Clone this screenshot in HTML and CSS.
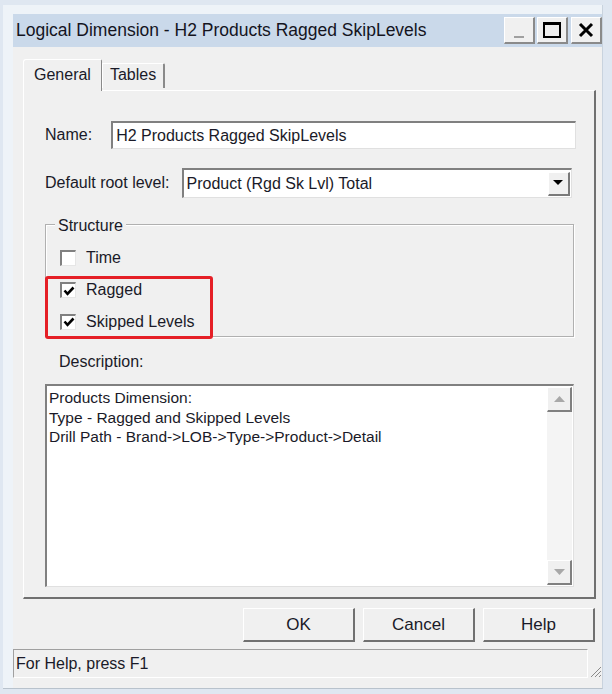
FILE: index.html
```html
<!DOCTYPE html>
<html>
<head>
<meta charset="utf-8">
<link rel="stylesheet" href="styles.css">
</head>
<body>
<div class="win">
  <div class="titlebar">
    <span class="title">Logical Dimension - H2 Products Ragged SkipLevels</span>
    <div class="tbtns">
      <div class="tbtn tmin"><span class="minbar"></span></div>
      <div class="tbtn tmax"><span class="maxbox"></span></div>
      <div class="tbtn tclose">
        <svg width="16" height="16" viewBox="0 0 16 16"><path d="M2 2 L14 14 M14 2 L2 14" stroke="#000" stroke-width="3" fill="none"/></svg>
      </div>
    </div>
  </div>
  <div class="client">
    <div class="tabs">
      <div class="tab active">General</div>
      <div class="tab">Tables</div>
    </div>
    <div class="panel">
      <div class="row name-row">
        <span class="lbl">Name:</span>
        <div class="input name-input">H2 Products Ragged SkipLevels</div>
      </div>
      <div class="row root-row">
        <span class="lbl">Default root level:</span>
        <div class="input select">
          <span class="sel-text">Product (Rgd Sk Lvl) Total</span>
          <div class="drop"><svg width="10" height="6" viewBox="0 0 10 6"><path d="M0 0 H10 L5 5 Z" fill="#000"/></svg></div>
        </div>
      </div>
      <div class="group">
        <span class="legend">Structure</span>
        <div class="chk-row r1"><span class="box"></span><span>Time</span></div>
        <div class="chk-row r2"><span class="box"><svg width="12" height="12" viewBox="0 0 12 12"><path d="M1.5 5.5 L4.5 8.8 L10.5 2.5" stroke="#000" stroke-width="2.6" fill="none"/></svg></span><span>Ragged</span></div>
        <div class="chk-row r3"><span class="box"><svg width="12" height="12" viewBox="0 0 12 12"><path d="M1.5 5.5 L4.5 8.8 L10.5 2.5" stroke="#000" stroke-width="2.6" fill="none"/></svg></span><span>Skipped Levels</span></div>
        <div class="highlight"></div>
      </div>
      <div class="desc-lbl">Description:</div>
      <div class="textarea">
        <div class="ta-text">Products Dimension:<br>Type - Ragged and Skipped Levels<br>Drill Path - Brand-&gt;LOB-&gt;Type-&gt;Product-&gt;Detail</div>
        <div class="vscroll">
          <div class="sbtn"><svg width="11" height="6" viewBox="0 0 11 6"><path d="M0 6 H11 L5.5 0 Z" fill="#a8a8a8"/></svg></div>
          <div class="track"></div>
          <div class="sbtn"><svg width="11" height="6" viewBox="0 0 11 6"><path d="M0 0 H11 L5.5 6 Z" fill="#a8a8a8"/></svg></div>
        </div>
      </div>
    </div>
    <div class="buttons">
      <div class="btn">OK</div>
      <div class="btn">Cancel</div>
      <div class="btn">Help</div>
    </div>
    <div class="statusrow">
      <div class="status">For Help, press F1</div>
      <div class="grip"><svg width="12" height="14" viewBox="0 0 12 14"><path d="M11 3 L1 13 M11 7 L5 13 M11 11 L9 13" stroke="#8a8a8a" stroke-width="1" fill="none"/></svg></div>
    </div>
  </div>
</div>
</body>
</html>
```
FILE: styles.css
```css
html, body {
  margin: 0;
  padding: 0;
}
body {
  background: #dfe7f1;
  font-family: "Liberation Sans", Arial, sans-serif;
  color: #1a1a28;
  width: 612px;
  height: 694px;
  overflow: hidden;
}
.win {
  margin: 5px 0 0 3px;
  width: 600px;
  height: 684px;
  box-sizing: border-box;
  background: #eef3f8;
  padding: 9px 0 0 10px;
  border-right: 1px solid #c9d3de;
  border-bottom: 1px solid #b8c2cc;
  display: flex;
  flex-direction: column;
}
.titlebar {
  height: 33px;
  background: #cad9ea;
  display: flex;
  align-items: center;
  justify-content: space-between;
  padding-left: 3px;
  flex: none;
}
.title {
  font-size: 17.5px;
  color: #14141e;
}
.tbtns {
  display: flex;
  gap: 2px;
  align-self: flex-start;
  margin-top: 3px;
}
.tbtn {
  width: 28px;
  height: 24px;
  background: #f0f0f0;
  border-top: 1px solid #fff;
  border-left: 1px solid #fff;
  border-right: 2px solid #8a8a8a;
  border-bottom: 2px solid #8a8a8a;
  display: flex;
  align-items: center;
  justify-content: center;
}
.tclose { margin-left: 1px; }
.minbar {
  width: 10px;
  height: 2px;
  background: #a0a0a0;
  margin-top: 14px;
}
.maxbox {
  width: 14px;
  height: 11px;
  border: 2px solid #000;
  border-top-width: 3px;
  box-sizing: content-box;
}
.client {
  flex: 1;
  background: #f0f0f0;
  display: flex;
  flex-direction: column;
  padding: 13px 0 0 10px;
}
.tabs {
  display: flex;
  align-items: flex-end;
  height: 30px;
  position: relative;
  z-index: 1;
}
.tab {
  font-size: 16px;
  height: 24px;
  line-height: 22px;
  padding: 0 7px;
  border-top: 1px solid #fff;
  border-left: 1px solid #fff;
  border-right: 2px solid #8a8a8a;
  border-top-right-radius: 2px;
  background: #f0f0f0;
  margin-bottom: 2px;
}
.tab.active {
  height: 31px;
  line-height: 30px;
  padding: 0 10px;
  margin-bottom: -1px;
  border-right: 1px solid #8a8a8a;
  border-top-left-radius: 3px;
}
.panel {
  width: 573px;
  height: 509px;
  box-sizing: border-box;
  border-top: 1px solid #fff;
  border-left: 1px solid #fff;
  border-right: 2px solid #707070;
  border-bottom: 2px solid #707070;
  padding: 30px 0 0 21px;
  font-size: 16px;
}
.row {
  display: flex;
  align-items: center;
}
.lbl { color: #1a1a28; }
.input {
  background: #fff;
  border-top: 2px solid #808080;
  border-left: 2px solid #808080;
  border-right: 1px solid #e0e0e0;
  border-bottom: 1px solid #e0e0e0;
  box-sizing: border-box;
}
.name-input {
  margin-left: 19px;
  width: 465px;
  height: 28px;
  line-height: 25px;
  padding-left: 3px;
}
.root-row { margin-top: 19px; }
.select {
  margin-left: 12px;
  width: 390px;
  height: 30px;
  display: flex;
  align-items: center;
  justify-content: space-between;
  padding: 0 1px 0 3px;
}
.drop {
  width: 22px;
  height: 24px;
  box-sizing: border-box;
  background: #f0f0f0;
  border-top: 1px solid #fff;
  border-left: 1px solid #fff;
  border-right: 2px solid #7a7a7a;
  border-bottom: 2px solid #7a7a7a;
  display: flex;
  align-items: center;
  justify-content: center;
}
.group {
  position: relative;
  margin-top: 26px;
  width: 529px;
  height: 113px;
  box-sizing: border-box;
  border: 1px solid #b0b0b0;
  box-shadow: 1px 1px 0 #fff, inset 1px 1px 0 #fff;
  padding: 16px 0 0 14px;
}
.legend {
  position: absolute;
  top: -11px;
  left: 9px;
  background: #f0f0f0;
  padding: 0 3px;
  line-height: 24px;
}
.chk-row {
  display: flex;
  align-items: center;
  height: 32px;
  gap: 10px;
}
.chk-row.r1 { height: 33px; }
.chk-row.r3 { height: 31px; }
.box {
  width: 16px;
  height: 16px;
  box-sizing: border-box;
  background: #fff;
  border-top: 2px solid #808080;
  border-left: 2px solid #808080;
  border-right: 1px solid #e6e6e6;
  border-bottom: 1px solid #e6e6e6;
  display: flex;
  align-items: center;
  justify-content: center;
}
.highlight {
  position: absolute;
  left: -1px;
  top: 51px;
  width: 168px;
  height: 63px;
  box-sizing: border-box;
  border: 3px solid #e51f26;
  border-radius: 3px;
}
.desc-lbl {
  margin: 13px 0 0 14px;
  line-height: 24px;
}
.textarea {
  margin-top: 10px;
  width: 529px;
  height: 203px;
  box-sizing: border-box;
  background: #fff;
  border-top: 2px solid #808080;
  border-left: 2px solid #808080;
  border-right: 1px solid #e0e0e0;
  border-bottom: 1px solid #e0e0e0;
  display: flex;
  justify-content: space-between;
  font-size: 15.5px;
}
.ta-text {
  padding: 2px 0 0 2px;
  line-height: 19.5px;
}
.vscroll {
  width: 25px;
  display: flex;
  flex-direction: column;
  padding: 1px 1px 1px 0;
}
.sbtn {
  height: 25px;
  box-sizing: border-box;
  background: #f0f0f0;
  border-top: 1px solid #fff;
  border-left: 1px solid #fff;
  border-right: 2px solid #808080;
  border-bottom: 2px solid #808080;
  display: flex;
  align-items: center;
  justify-content: center;
}
.track {
  flex: 1;
  background: #f4f4f4;
}
.buttons {
  display: flex;
  justify-content: flex-end;
  gap: 8px;
  margin-top: 9px;
  padding-right: 7px;
}
.btn {
  width: 112px;
  height: 34px;
  box-sizing: border-box;
  background: #f0f0f0;
  border-top: 1px solid #fff;
  border-left: 1px solid #fff;
  border-right: 2px solid #707070;
  border-bottom: 2px solid #707070;
  font-size: 17px;
  display: flex;
  align-items: center;
  justify-content: center;
}
.statusrow {
  margin: 7px 0 0 -10px;
  display: flex;
  align-items: flex-end;
}
.status {
  width: 575px;
  height: 29px;
  box-sizing: border-box;
  border-top: 1px solid #a0a0a0;
  border-left: 1px solid #a0a0a0;
  border-right: 1px solid #fff;
  border-bottom: 1px solid #fff;
  font-size: 16px;
  line-height: 28px;
  padding-left: 2px;
}
.grip {
  margin-left: 2px;
  height: 14px;
}
```
